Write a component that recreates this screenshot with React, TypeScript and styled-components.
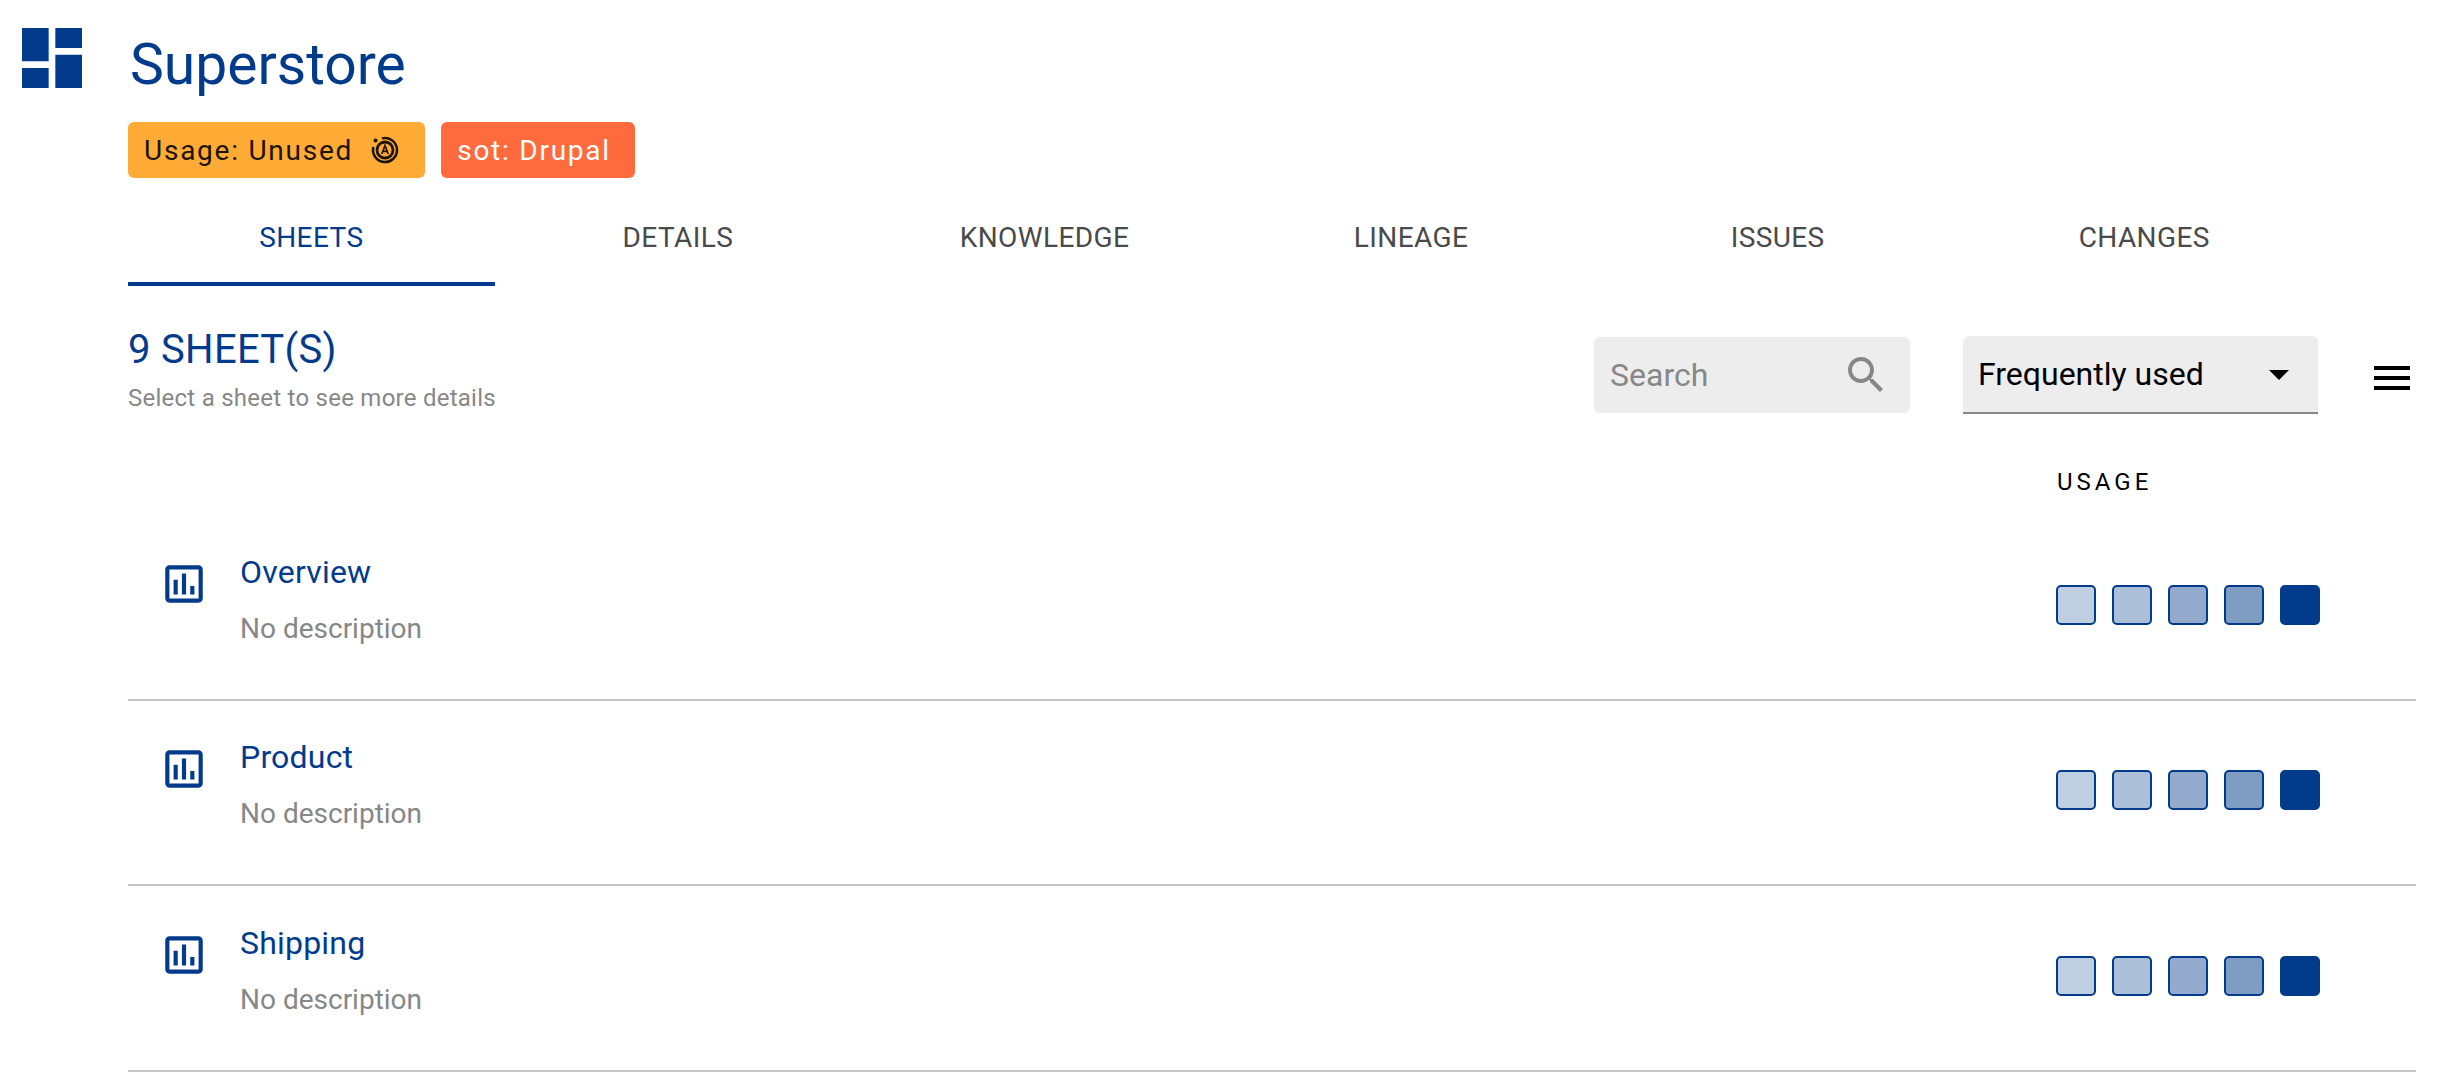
import { createGlobalStyle, styled } from "styled-components";

const BLUE = "#033b8c";
const GREY = "#878787";

const GlobalStyle = createGlobalStyle`
  html, body {
    margin: 0;
    padding: 0;
    background: #fff;
    font-family: Roboto, "Liberation Sans", sans-serif;
  }
  * { box-sizing: border-box; }
`;

const Page = styled.div`
  display: flex;
  width: 2450px;
  height: 1080px;
  overflow: hidden;
`;

const Rail = styled.div`
  width: 128px;
  flex: none;
  padding: 18px 0 0 12px;
`;

const Main = styled.div`
  width: 2288px;
  flex: none;
  padding-top: 32px;
`;

const Title = styled.h1`
  margin: 0 0 0 2px;
  font-size: 57px;
  line-height: 66px;
  font-weight: 400;
  color: ${BLUE};
`;

const Chips = styled.div`
  display: flex;
  gap: 16px;
  margin-top: 24px;
`;

const Chip = styled.div<{ $bg: string; $fg: string }>`
  display: flex;
  align-items: center;
  height: 56px;
  padding: 0 24px 0 16px;
  gap: 16px;
  border-radius: 6px;
  font-size: 28px;
  letter-spacing: 1.76px;
  background: ${(p) => p.$bg};
  color: ${(p) => p.$fg};
`;

const Tabs = styled.div`
  display: flex;
  margin-top: 12px;
  height: 96px;
`;

const Tab = styled.div<{ $active?: boolean }>`
  width: 366.6px;
  display: flex;
  align-items: center;
  justify-content: center;
  padding-top: 2px;
  font-size: 28px;
  letter-spacing: 0.4px;
  color: ${(p) => (p.$active ? BLUE : "#4a4a4a")};
  border-bottom: 4px solid ${(p) => (p.$active ? BLUE : "transparent")};
`;

const Toolbar = styled.div`
  display: flex;
  align-items: flex-start;
  margin-top: 40px;
`;

const Heading = styled.div`
  flex: 1;
`;

const Count = styled.div`
  font-size: 40px;
  line-height: 47px;
  letter-spacing: 0.3px;
  color: ${BLUE};
`;

const Hint = styled.div`
  margin-top: 11px;
  font-size: 24px;
  line-height: 28px;
  letter-spacing: 0.25px;
  color: ${GREY};
`;

const SearchBox = styled.div`
  display: flex;
  align-items: center;
  justify-content: space-between;
  width: 316px;
  height: 76px;
  margin-top: 11px;
  padding: 0 20px 0 16px;
  border-radius: 6px;
  background: #ededed;
  font-size: 32px;
  color: ${GREY};
`;

const Select = styled.div`
  display: flex;
  align-items: center;
  justify-content: space-between;
  width: 355px;
  height: 78px;
  margin: 10px 0 0 53px;
  padding: 0 15px;
  border-radius: 6px 6px 0 0;
  border-bottom: 2px solid ${GREY};
  background: #ededed;
  font-size: 32px;
  color: #000;
`;

const MenuButton = styled.div`
  margin: 28px 0 0 50px;
  height: 48px;
  line-height: 0;
`;

const UsageHead = styled.div`
  margin: 54px 0 19px;
  padding-left: 1929px;
  font-size: 24px;
  line-height: 28px;
  letter-spacing: 4px;
  color: #000;
`;

const Row = styled.div`
  display: flex;
  align-items: center;
  height: 185.5px;
  padding-left: 31px;
  border-bottom: 2px solid #c4c4c4;
`;

const SheetIcon = styled.div`
  width: 50px;
  height: 50px;
  flex: none;
  margin-top: -46px;
  line-height: 0;
`;

const RowText = styled.div`
  flex: 1;
  margin-left: 31px;
  margin-top: -16px;
`;

const RowName = styled.div`
  font-size: 32px;
  line-height: 38px;
  letter-spacing: 0.2px;
  color: ${BLUE};
`;

const RowDesc = styled.div`
  margin-top: 21px;
  font-size: 28px;
  line-height: 33px;
  color: ${GREY};
`;

const Squares = styled.div`
  display: flex;
  gap: 16px;
  margin: -4px 96px 0 0;
`;

const Square = styled.div<{ $fill: string }>`
  width: 40px;
  height: 40px;
  border: 2px solid ${BLUE};
  border-radius: 5px;
  background: ${(p) => p.$fill};
`;

const shades = ["#bfcee1", "#abbfd8", "#93aacd", "#7f9cc2", BLUE];
const tabs = ["SHEETS", "DETAILS", "KNOWLEDGE", "LINEAGE", "ISSUES", "CHANGES"];
const sheets = ["Overview", "Product", "Shipping"];

function Icon({ d, size, color }: { d: string; size: number; color: string }) {
  return (
    <svg width={size} height={size} viewBox="0 0 24 24" fill={color}>
      <path d={d} />
    </svg>
  );
}

// ring with a gap and a dot, "auto" badge from the usage chip
function AutoBadge() {
  const ink = "#1c1408";
  return (
    <svg width="32" height="32" viewBox="0 0 32 32" fill="none">
      <path d="M13 4.400A12 12 0 1 1 4.400 13" stroke={ink} strokeWidth="2.500" />
      <circle cx="6.500" cy="6.500" r="2" fill={ink} />
      <circle cx="16" cy="16" r="8" stroke={ink} strokeWidth="2.800" />
      <path d="M12.800 20 16 11.500l3.200 8.500M13.900 17.300h4.200" stroke={ink} strokeWidth="1.700" />
    </svg>
  );
}

export default function App() {
  return (
    <Page>
      <GlobalStyle />
      <Rail>
        <Icon size={80} color={BLUE} d="M3 13h8V3H3v10zm0 8h8v-6H3v6zm10 0h8V11h-8v10zm0-18v6h8V3h-8z" />
      </Rail>
      <Main>
        <Title>Superstore</Title>
        <Chips>
          <Chip $bg="#ffab35" $fg="#1c1408">
            Usage: Unused
            <AutoBadge />
          </Chip>
          <Chip $bg="#ff6b3d" $fg="#fff">sot: Drupal</Chip>
        </Chips>
        <Tabs>
          {tabs.map((t, i) => (
            <Tab key={t} $active={i === 0}>{t}</Tab>
          ))}
        </Tabs>
        <Toolbar>
          <Heading>
            <Count>9 SHEET(S)</Count>
            <Hint>Select a sheet to see more details</Hint>
          </Heading>
          <SearchBox>
            Search
            <Icon size={48} color={GREY} d="M15.500 14h-.79l-.28-.27C15.410 12.590 16 11.110 16 9.500 16 5.910 13.090 3 9.500 3S3 5.910 3 9.500 5.910 16 9.500 16c1.610 0 3.090-.59 4.230-1.570l.27.28v.79l5 4.990L20.490 19l-4.990-5zm-6 0C7.010 14 5 11.990 5 9.500S7.010 5 9.500 5 14 7.010 14 9.500 11.990 14 9.500 14z" />
          </SearchBox>
          <Select>
            Frequently used
            <Icon size={48} color="#000" d="M7 10l5 5 5-5z" />
          </Select>
          <MenuButton>
            <Icon size={48} color="#000" d="M3 18h18v-2H3v2zm0-5h18v-2H3v2zm0-7v2h18V6H3z" />
          </MenuButton>
        </Toolbar>
        <UsageHead>USAGE</UsageHead>
        {sheets.map((s) => (
          <Row key={s}>
            <SheetIcon>
              <Icon size={50} color={BLUE} d="M9 17H7v-7h2v7zm4 0h-2V7h2v10zm4 0h-2v-4h2v4zm2 2H5V5h14v14zm0-16H5c-1.100 0-2 .9-2 2v14c0 1.100.9 2 2 2h14c1.100 0 2-.9 2-2V5c0-1.100-.9-2-2-2z" />
            </SheetIcon>
            <RowText>
              <RowName>{s}</RowName>
              <RowDesc>No description</RowDesc>
            </RowText>
            <Squares>
              {shades.map((c) => (
                <Square key={c} $fill={c} />
              ))}
            </Squares>
          </Row>
        ))}
      </Main>
    </Page>
  );
}
